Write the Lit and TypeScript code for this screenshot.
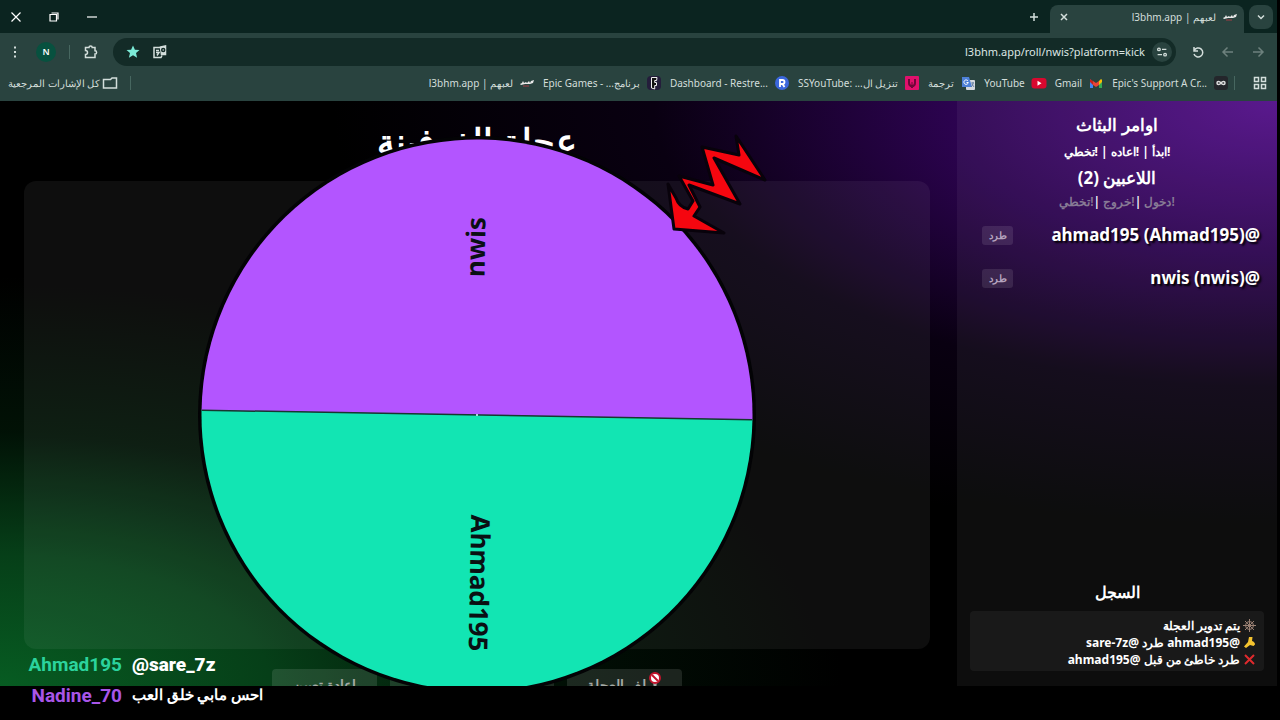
import { LitElement, html, css, svg } from "lit";
import { customElement } from "lit/decorators.js";

const bookmarks = [
  { kind: "epic", label: "Epic's Support A Cr..." },
  { kind: "gmail", label: "Gmail" },
  { kind: "youtube", label: "YouTube" },
  { kind: "translate", label: "ترجمة" },
  { kind: "ssyoutube", label: "تنزيل ال... :SSYouTube" },
  { kind: "restream", label: "Dashboard - Restre..." },
  { kind: "epicgames", label: "برنامج... - Epic Games" },
  { kind: "app", label: "لعبهم | l3bhm.app" },
];

const favicon: Record<string, unknown> = {
  epic: svg`<rect x="1" y="1" width="14" height="14" rx="3" fill="#24262b"/><path d="M8 8C6.500 6 4 6 4 8S6.500 10 8 8S12 6 12 8S9.500 10 8 8Z" fill="none" stroke="#ddd" stroke-width="1.500"/>`,
  gmail: svg`<path d="M2 4v9h3V8z" fill="#4285f4"/><path d="M14 4v9h-3V8z" fill="#34a853"/><path d="M2 4v3l3 3V6z" fill="#c5221f"/><path d="M5 6l3 2 3-2v4l-3 2-3-2z" fill="#ea4335"/><path d="M11 6l2-2 1 1v2l-3 3z" fill="#fbbc04"/>`,
  youtube: svg`<rect x="0.500" y="3" width="15" height="10.500" rx="3" fill="#d9082f"/><path d="M6.500 5.800v5l4-2.500z" fill="#fff"/>`,
  translate: svg`<rect x="6" y="5" width="9" height="10" rx="1" fill="#d5d9df"/><path d="M2 2h7l3 10H2z" fill="#4d80d8"/><path d="M8 6A2.200 2.200 0 1 0 8.300 7.500H6.500" fill="none" stroke="#fff"/><path d="M11 8h3M13 7v1c0 2-1 3-2 4M12 9l2 3" fill="none" stroke="#57749a" stroke-width=".8"/>`,
  ssyoutube: svg`<rect x="1" y="1" width="14" height="14" rx="1" fill="#e0106c"/><path d="M5 4v4a3 3 0 0 0 6 0V4" fill="none" stroke="#6d0638" stroke-width="2"/><path d="M8 7v6M6 11l2 2 2-2" fill="none" stroke="#6d0638"/>`,
  restream: svg`<circle cx="8" cy="8" r="7" fill="#3b67dc"/><path d="M6 12V5h2.500a2 2 0 0 1 0 4H6m2.500 0 2 3" fill="none" stroke="#fff" stroke-width="1.800"/>`,
  epicgames: svg`<rect x="1" y="1" width="14" height="14" rx="4" fill="#241d3b"/><path d="M5.500 2.500h5.500l-.4 3H8.700v2h1.800v3H8.700V14l-3.200-1z" fill="#111" stroke="#eee" stroke-width="1"/>`,
  app: svg`<path d="M1 9l2-1 1-2 1 2 2-1 1 1 2-2 1 2 1-2 3-1-1 3-3 1H6L2 10z" fill="#e9e9e9" stroke="none"/><path d="M4 11h6" stroke="#a33c45" stroke-width="1"/>`,
};

const glyph = (paths: unknown, size = 16) =>
  html`<svg class="glyph" width=${size} height=${size} viewBox="0 0 16 16" aria-hidden="true">${paths}</svg>`;

@customElement("browser-bar")
export class BrowserBar extends LitElement {
  static styles = css`
    :host { display: block; direction: rtl; background: #29433f; color: #d3dedb; font: 10px/16px "Noto Sans", sans-serif; }
    button, a { color: inherit; font: inherit; text-decoration: none; }
    button { border: 0; padding: 0; background: none; display: grid; place-items: center; }
    .glyph { display: block; fill: none; stroke: currentColor; stroke-width: 1.500; flex: none; }
    .tabs { display: flex; align-items: center; height: 33px; background: #0b2420; padding: 0 4px; }
    .more { width: 24px; height: 24px; border-radius: 8px; background: #29433f; }
    .tab { display: flex; align-items: center; gap: 6px; width: 182px; height: 24px; margin: 5px 5px 0 0; padding: 0 6px 4px; border-radius: 8px 8px 0 0; background: #29433f; }
    .tab button { margin-right: auto; }
    .plus { margin-right: 8px; }
    .window { display: flex; gap: 22px; margin-right: auto; padding-left: 4px; color: #fff; }
    .window .glyph { stroke-width: 1.200; }
    .tools { display: flex; align-items: center; gap: 14px; height: 38px; padding: 0 11px 0 7px; }
    .user { display: flex; align-items: center; gap: 13px; }
    .faded { opacity: .4; }
    .address { display: flex; flex: 1; align-items: center; gap: 7px; height: 28px; border-radius: 14px; background: #132b27; padding: 0 4px 0 12px; }
    .page-actions { display: flex; gap: 11px; }
    .site { width: 20px; height: 20px; border-radius: 50%; background: #29433f; }
    input { flex: 1; min-width: 0; border: 0; padding: 0; outline: 0; background: none; color: #dce6e4; font: 11px/20px "Noto Sans", sans-serif; direction: ltr; text-align: right; }
    .star { color: #7cebd7; }
    .rule { width: 1px; height: 14px; background: #476760; }
    .avatar { width: 20px; height: 20px; border-radius: 50%; background: #07513f; color: #fff; font-size: 9px; font-weight: 600; }
    .marks { display: flex; align-items: center; gap: 8px; height: 30px; padding: 0 9px 6px 8px; box-sizing: border-box; white-space: nowrap; }
    .marks a { display: flex; align-items: center; gap: 6px; }
    .apps { margin-left: 9px; }
    .marks .rule + a { margin-right: -3px; }
    .marks a.all { gap: 2px; margin-right: 0; }
    .end { display: flex; align-items: center; gap: 12px; margin-right: auto; }
  `;
  render() {
    return html`
      <div class="tabs">
        <button class="more" aria-label="البحث في علامات التبويب">${glyph(svg`<path d="M5 6.500l3 3 3-3"/>`)}</button>
        <div class="tab">${glyph(favicon.app)}<span>لعبهم | l3bhm.app</span><button aria-label="إغلاق علامة التبويب">${glyph(svg`<path d="M5 5l6 6M11 5l-6 6"/>`)}</button></div>
        <button class="plus" aria-label="علامة تبويب جديدة">${glyph(svg`<path d="M8 4v8M4 8h8"/>`)}</button>
        <div class="window">
          <button aria-label="تصغير">${glyph(svg`<path d="M3 8h10"/>`)}</button>
          <button aria-label="استعادة">${glyph(svg`<path d="M4 5.500h6.500V12H4zM5.500 4H12v6.500"/>`)}</button>
          <button aria-label="إغلاق">${glyph(svg`<path d="M3.500 3.500l9 9M12.500 3.500l-9 9"/>`)}</button>
        </div>
      </div>
      <div class="tools">
        <button class="faded" aria-label="رجوع">${glyph(svg`<path d="M3 8h10M8.500 3.500L13 8l-4.500 4.500"/>`)}</button>
        <button class="faded" aria-label="إلى الأمام">${glyph(svg`<path d="M13 8H3M7.500 3.500L3 8l4.500 4.500"/>`)}</button>
        <button aria-label="إعادة التحميل">${glyph(svg`<path d="M4 3v4h4M4.200 6.500A4.500 4.500 0 1 1 4 10"/>`)}</button>
        <div class="address">
          <button class="site" aria-label="معلومات الموقع">${glyph(svg`<circle cx="4.500" cy="5" r="1.500"/><path d="M8 5h5M3 11h5"/><circle cx="11.500" cy="11" r="1.500"/>`, 14)}</button>
          <input aria-label="العنوان" value="l3bhm.app/roll/nwis?platform=kick" />
          <div class="page-actions">
            <button aria-label="ترجمة">${glyph(svg`<path d="M8 3.500H2v10h7l1-2M4 6.500h3M4 8.500h3l-2 3"/><path d="M8.500 3l5-1v8.500h-4z" fill="currentColor"/><circle cx="11.200" cy="6" r="1.500" stroke="#132b27"/>`)}</button>
            <button class="star" aria-label="إشارة مرجعية">${glyph(svg`<path d="M8 1.500l1.900 4.200 4.600.4-3.500 3 1.100 4.600L8 11.300l-4.100 2.400 1.100-4.600-3.500-3 4.600-.4z" fill="currentColor" stroke="none"/>`)}</button>
          </div>
        </div>
        <div class="user">
          <button aria-label="الإضافات">${glyph(svg`<path d="M2.500 3.500H6a1.600 1.600 0 0 1 3.200 0H12v3.300a1.600 1.600 0 0 1 0 3.200v3.500H2.500v-3a2 2 0 0 0 0-4z"/>`)}</button>
          <span class="rule"></span>
          <button class="avatar" aria-label="الملف الشخصي">N</button>
          <button aria-label="القائمة">${glyph(svg`<path d="M8 2.500v2M8 7v2M8 11.500v2" stroke-width="2"/>`)}</button>
        </div>
      </div>
      <nav class="marks">
        <button class="apps" aria-label="التطبيقات">${glyph(svg`<path d="M2.500 2.500h4v4h-4zM9.500 2.500h4v4h-4zM2.500 9.500h4v4h-4zM9.500 9.500h4v4h-4z"/>`)}</button>
        <span class="rule"></span>
        ${bookmarks.map((b) => html`<a href="#"><svg width="16" height="16" viewBox="0 0 16 16" aria-hidden="true">${favicon[b.kind]}</svg><span dir="auto">${b.label}</span></a>`)}
        <div class="end"><span class="rule"></span><a class="all" href="#">${glyph(svg`<path d="M1.500 4.500h7l1.500-1.500h4.500v10h-13z"/>`)}<span>كل الإشارات المرجعية</span></a></div>
      </nav>`;
  }
}

@customElement("spin-wheel")
export class SpinWheel extends LitElement {
  static styles = css`
    :host { display: block; }
    svg { display: block; width: 100%; height: 100%; overflow: visible; }
    text { font: 700 26px "Noto Sans", sans-serif; text-anchor: middle; dominant-baseline: central; fill: #0a1013; }
  `;
  render() {
    return html`<svg viewBox="-279 -279 558 558" role="img" aria-label="nwis, Ahmad195">
      <circle r="279" fill="#030305"/>
      <g transform="rotate(1)">
        <path d="M-275.500 0A275.500 275.500 0 0 1 275.500 0Z" fill="#b355ff"/>
        <path d="M-275.500 0A275.500 275.500 0 0 0 275.500 0Z" fill="#12e5b3"/>
        <path d="M-275 0H275" stroke="#17382f" stroke-width="1.500"/>
      </g>
      <circle r="1" fill="#dff"/>
      <text transform="translate(-2 -168) rotate(-89)">nwis</text>
      <text transform="translate(3 168) rotate(91)">Ahmad195</text>
      <path d="M288-235L259-279L262-260L225-268L236-230L202-239L216-214L211-206Q202-208 199-217L191-231L197-186L247-182L217-199L223-208L212-230L263-211L237-257Z" fill="#f5060f" stroke="#08020b" stroke-width="3" stroke-linejoin="round"/>
    </svg>`;
  }
}

@customElement("app-root")
export class AppRoot extends LitElement {
  static styles = css`
    :host { display: flex; flex-direction: column; position: relative; height: 100vh; overflow: hidden; background: #000; color: #fff; font-family: "Noto Sans", sans-serif; }
    * { box-sizing: border-box; }
    h1, h2, p, ul { margin: 0; padding: 0; }
    .screen { flex: 1; min-height: 0; display: flex; flex-direction: column; margin: 0 3px 34px 0; }
    .page { direction: rtl; flex: 1; min-height: 0; display: grid; grid-template-columns: 320px minmax(0, 1fr); overflow: hidden;
      background: radial-gradient(ellipse 74% 74% at 100% 0, #510d88 0, #2c0350 34%, #12002280 66%, #0a001400 100%), radial-gradient(ellipse 66% 70% at 0 100%, #075c22 0, #063f18 32%, #021f0a90 62%, #00100400 100%), #000; }
    aside { display: flex; flex-direction: column; padding: 12px 13px 15px; background: #ffffff0d; text-align: center; }
    h2 { font-size: 17px; line-height: 24px; font-weight: 700; }
    .commands { font-size: 12px; line-height: 29px; font-weight: 700; }
    .hint { font-size: 12px; line-height: 24px; font-weight: 600; }
    .hint span { color: #877a95; }
    .players { display: grid; gap: 19px; margin-top: 9px; padding: 0 4px 0 12px; list-style: none; font-size: 17px; line-height: 24px; font-weight: 700; text-shadow: 2px 2px 2px #000; }
    .players li { display: flex; align-items: center; justify-content: space-between; }
    .kick { width: 31px; height: 19px; padding: 0; border: 0; border-radius: 3px; background: #ffffff1a; color: #b5a3bf; font: 600 10px/19px "Noto Sans", sans-serif; }
    .history { margin-top: auto; }
    .history h2 { font-size: 16px; }
    .log { margin-top: 7px; padding: 6px 8px 3px; min-height: 59px; border-radius: 4px; background: #ffffff0d; list-style: none; text-align: right; font-size: 12px; line-height: 17px; font-weight: 700; }
    .log li { display: flex; align-items: center; gap: 3px; }
    main { display: flex; flex-direction: column; align-items: center; height: calc(100% + 24px); padding: 20px 27px 6px 24px; }
    h1 { font-size: 35px; line-height: 40px; font-weight: 900; }
    .stage { position: relative; align-self: stretch; flex: 1; margin: 20px 0; border-radius: 12px; background: #ffffff0e; }
    .wheel { position: absolute; inset: -45px 0; z-index: 1; }
    .controls { display: flex; gap: 13px; height: 35px; flex: none; }
    .controls button { display: flex; align-items: center; justify-content: center; gap: 2px; width: 115px; padding: 0 0 4px; border: 0; border-radius: 4px; background: #ffffff1c; color: #a5aaa6; font: 600 14px/20px "Noto Sans", sans-serif; }
    .controls svg { align-self: flex-start; margin-top: 3px; }
    .controls .wide { width: 164px; }
    .controls .reset { width: 105px; }
    .chat { position: absolute; left: 27px; bottom: 9px; display: grid; grid-template-columns: 95px auto; column-gap: 10px; font: 700 19px/31px Roboto, "Noto Sans", sans-serif; white-space: nowrap; z-index: 2; }
    .chat span { text-align: right; }
    .chat .arabic { font-size: 15px; }
    .mint { color: #2bd39d; }
    .violet { color: #a855e8; }
  `;
  render() {
    return html`
      <div class="screen">
        <browser-bar></browser-bar>
        <div class="page">
          <aside>
            <h2>اوامر البثاث</h2>
            <p class="commands">!ابدأ | !اعاده | !تخطي</p>
            <h2>اللاعبين (2)</h2>
            <p class="hint"><span>!دخول</span> |<span>!خروج</span> |<span>!تخطي</span></p>
            <ul class="players">
              <li><span>@ahmad195 (Ahmad195)</span><button class="kick">طرد</button></li>
              <li><span>@nwis (nwis)</span><button class="kick">طرد</button></li>
            </ul>
            <section class="history">
              <h2>السجل</h2>
              <ul class="log">
                <li><svg width="13" height="13" viewBox="0 0 13 13" stroke="#9b8174" fill="none" aria-hidden="true"><circle cx="6.500" cy="6.500" r="4"/><path d="M6.500 0v13M0 6.500h13M2 2l9 9M11 2l-9 9"/></svg><span>يتم تدوير العجلة</span></li>
                <li><svg width="13" height="13" viewBox="0 0 13 13" aria-hidden="true"><path d="M6 1h3.500L9 5q3 1 3 3.500L10.500 10 7 9l-4 3L1 10.500 5 6z" fill="#f4c32f"/></svg><span>@ahmad195 طرد @sare-7z</span></li>
                <li><svg width="13" height="13" viewBox="0 0 13 13" aria-hidden="true"><path d="M2 2l9 9M11 2l-9 9" stroke="#df2a2d" stroke-width="2"/></svg><span>طرد خاطئ من قبل @ahmad195</span></li>
              </ul>
            </section>
          </aside>
          <main>
            <h1>عجلة الفرفينة</h1>
            <div class="stage"><spin-wheel class="wheel"></spin-wheel></div>
            <div class="controls">
              <button><svg width="14" height="18" viewBox="0 0 14 18" aria-hidden="true"><path d="M5 10h4l-1 7H6z" fill="#a5aaa6"/><circle cx="7" cy="6" r="5" fill="#fff" stroke="#c4142c" stroke-width="2"/><path d="M4 3l6 6" stroke="#c4142c" stroke-width="2"/></svg>لف العجلة</button>
              <button class="wide" aria-label="خيارات"></button>
              <button class="reset">إعادة تعيين</button>
            </div>
          </main>
        </div>
      </div>
      <div class="chat">
        <span class="mint">Ahmad195</span><b>@sare_7z</b>
        <span class="violet">Nadine_70</span><b class="arabic" dir="rtl">احس مابي خلق العب</b>
      </div>`;
  }
}
